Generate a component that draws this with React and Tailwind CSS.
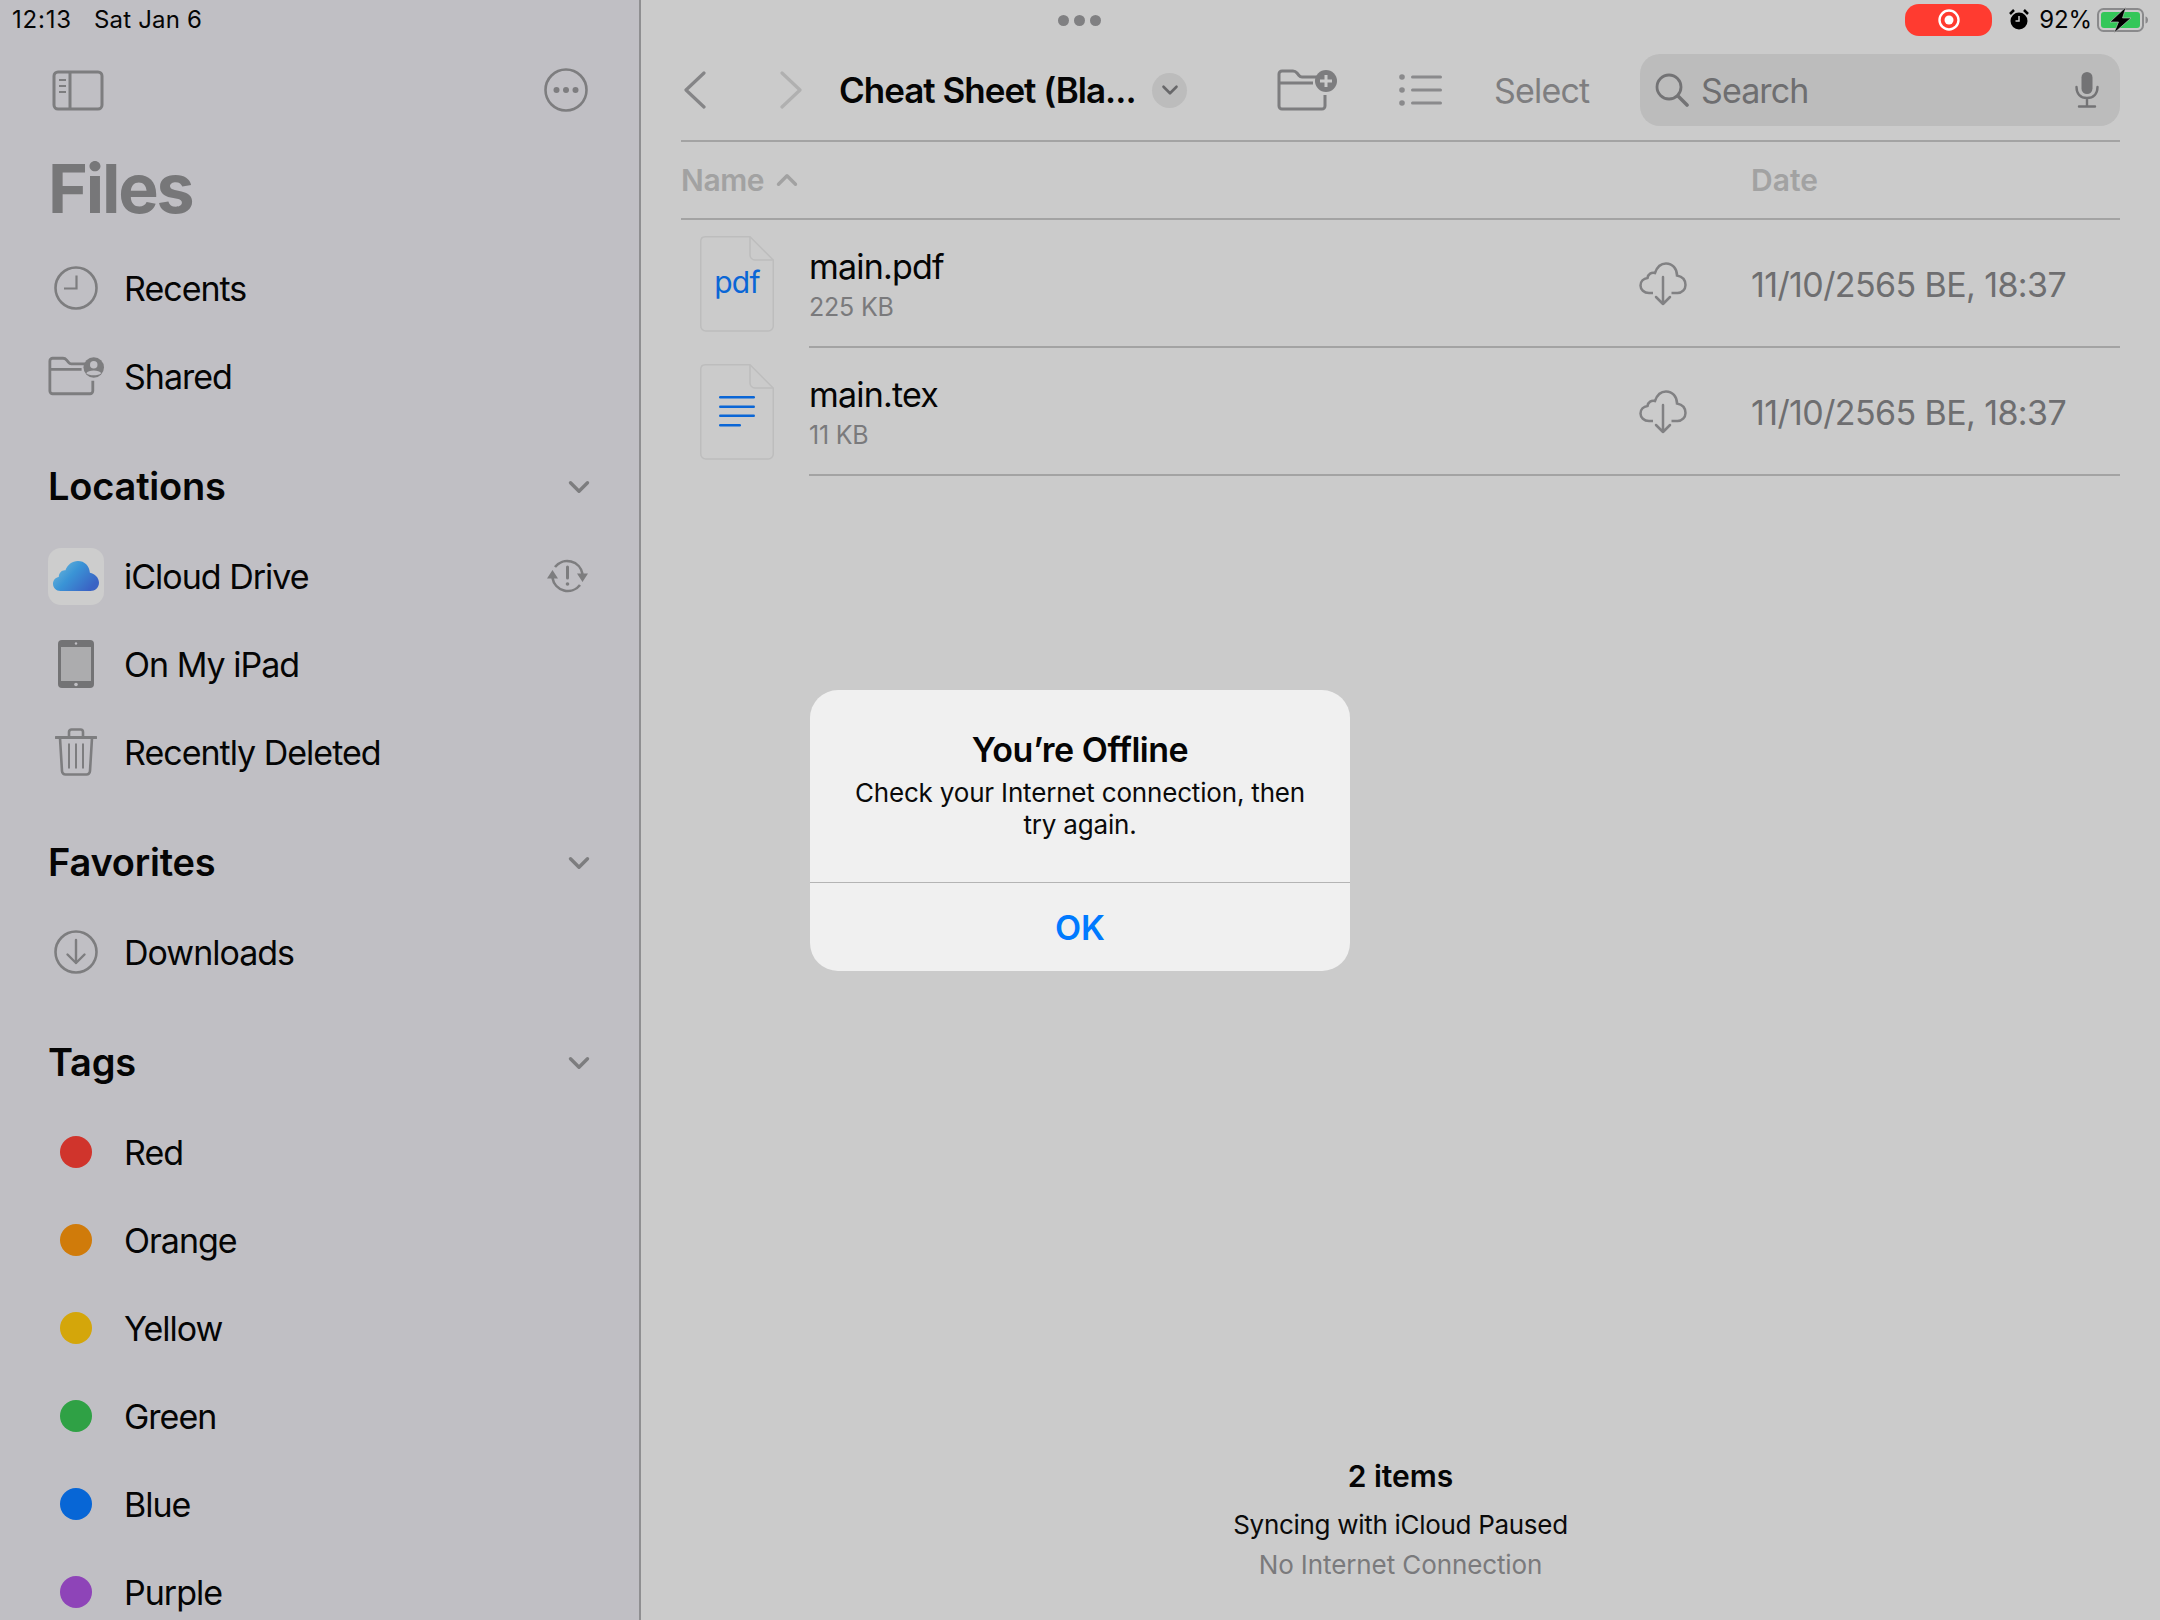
import { ChevronDown, ChevronUp } from 'lucide-react';

const GRAY = '#7d7d7f';

function PanelIcon() {
  return (
    <svg width="52" height="41" viewBox="0 0 52 41" fill="none" stroke={GRAY} strokeWidth="3">
      <rect x="2" y="2" width="48" height="37" rx="4" />
      <path d="M18 2v37" />
      <path d="M7 10h7M7 16h7M7 22h7" strokeWidth="2" />
    </svg>
  );
}

function MoreIcon() {
  return (
    <svg width="44" height="44" viewBox="0 0 44 44" fill="none">
      <circle cx="22" cy="22" r="20.5" stroke={GRAY} strokeWidth="2.6" />
      <circle cx="12.5" cy="22" r="3" fill={GRAY} />
      <circle cx="22" cy="22" r="3" fill={GRAY} />
      <circle cx="31.5" cy="22" r="3" fill={GRAY} />
    </svg>
  );
}

function ClockIcon() {
  return (
    <svg width="44" height="44" viewBox="0 0 44 44" fill="none" stroke={GRAY} strokeWidth="2.6">
      <circle cx="22" cy="22" r="20.5" />
      <path d="M22.5 9.5v13H10" strokeWidth="2.2" />
    </svg>
  );
}

function DownloadIcon() {
  return (
    <svg width="44" height="44" viewBox="0 0 44 44" fill="none" stroke={GRAY} strokeWidth="2.6">
      <circle cx="22" cy="22" r="20.5" />
      <path d="M22 10v23M13.5 24.5 22 33l8.500-8.500" strokeWidth="2.4" strokeLinecap="round" strokeLinejoin="round" />
    </svg>
  );
}

function FolderShape({ children }) {
  return (
    <svg width="60" height="42" viewBox="0 0 60 42" fill="none">
      <path
        d="M2 14V5a3 3 0 0 1 3-3h11c2 0 3 .8 4 2l2 2.500c.8 1 1.500 1.500 3 1.500h15M2 14h34M2 14v23a3 3 0 0 0 3 3h40a3 3 0 0 0 3-3V26"
        stroke={GRAY}
        strokeWidth="3"
      />
      {children}
    </svg>
  );
}

function SharedFolderIcon() {
  return (
    <FolderShape>
      <circle cx="49" cy="12" r="11" fill={GRAY} />
      <circle cx="49" cy="9" r="4" fill="#c0bfc4" />
      <path d="M41 18c2-4 14-4 16 0-3 3-13 3-16 0Z" fill="#c0bfc4" />
    </FolderShape>
  );
}

function NewFolderIcon() {
  return (
    <FolderShape>
      <circle cx="49" cy="12" r="11" fill={GRAY} />
      <path d="M49 6v12M43 12h12" stroke="#cbcbcb" strokeWidth="3" />
    </FolderShape>
  );
}

function CloudLogo() {
  return (
    <svg width="46" height="31" viewBox="0 0 48 32" preserveAspectRatio="none">
      <defs>
        <linearGradient id="icloud" x1="0" y1="0" x2="1" y2="0.6">
          <stop offset="0" stopColor="#78bedb" />
          <stop offset="0.5" stopColor="#3a94d6" />
          <stop offset="1" stopColor="#3a63c4" />
        </linearGradient>
      </defs>
      <path
        d="M8 31C3 31 0 27.500 0 23.500 0 19.500 3 17 6 16.500 6 12 9.500 9 13 9.500 15 4 20 0 26 0c7 0 12 5 12.500 12 5 1 9.500 5 9.500 10.500C48 27.500 44 31 39 31Z"
        fill="url(#icloud)"
      />
    </svg>
  );
}

function SyncAlertIcon() {
  return (
    <svg width="41" height="34" viewBox="0 0 41 34" fill="none" stroke={GRAY}>
      <path d="M35.500 15A15.500 15.500 0 0 0 8 8M5.500 19A15.500 15.500 0 0 0 33 26" strokeWidth="2.600" />
      <path d="M0 19.500h11L5.500 11Z M30 14.500h11L35.500 23Z" fill={GRAY} stroke="none" />
      <path d="M20.500 8v11" strokeWidth="3" strokeLinecap="round" />
      <circle cx="20.500" cy="25" r="1.800" fill={GRAY} stroke="none" />
    </svg>
  );
}

function IpadIcon() {
  return (
    <svg width="36" height="48" viewBox="0 0 36 48">
      <rect x="0" y="0" width="36" height="48" rx="4" fill="#737375" />
      <rect x="3" y="7" width="30" height="34" fill="#acacae" />
      <circle cx="18" cy="3.500" r="1.200" fill="#c0bfc4" />
      <circle cx="18" cy="44.500" r="1.800" fill="#c0bfc4" />
    </svg>
  );
}

function TrashIcon() {
  return (
    <svg width="42" height="48" viewBox="0 0 42 48" fill="none" stroke={GRAY} strokeWidth="2.6">
      <path d="M1 9.500h40" strokeWidth="3" strokeLinecap="round" />
      <path d="M14 9V4a2.500 2.500 0 0 1 2.500-2.500h9A2.500 2.500 0 0 1 28 4v5" />
      <path d="M5 10l2 33a3.500 3.500 0 0 0 3.500 3.500h21A3.500 3.500 0 0 0 35 43l2-33" />
      <path d="M14 15.500v25M21 15.500v25M28 15.500v25" strokeWidth="2" />
    </svg>
  );
}

function ListIcon() {
  return (
    <svg width="44" height="34" viewBox="0 0 44 34" fill="#8a8a8c">
      <circle cx="3" cy="4" r="2.800" />
      <circle cx="3" cy="17" r="2.800" />
      <circle cx="3" cy="30" r="2.800" />
      <rect x="12" y="2.500" width="31" height="3" rx="1.500" />
      <rect x="12" y="15.500" width="31" height="3" rx="1.500" />
      <rect x="12" y="28.500" width="31" height="3" rx="1.500" />
    </svg>
  );
}

function NavChevron({ flip, color }) {
  return (
    <svg width="22" height="38" viewBox="0 0 22 38" fill="none">
      <path
        d={flip ? 'M2 2l18 17L2 36' : 'M20 2 2 19l18 17'}
        stroke={color}
        strokeWidth="3.200"
        strokeLinecap="round"
        strokeLinejoin="round"
      />
    </svg>
  );
}

function SearchIcon() {
  return (
    <svg width="34" height="34" viewBox="0 0 34 34" fill="none" stroke="#737375">
      <circle cx="14" cy="14" r="12" strokeWidth="2.8" />
      <path d="M23 23l9 9" strokeWidth="3.600" strokeLinecap="round" />
    </svg>
  );
}

function MicIcon() {
  return (
    <svg width="24" height="36" viewBox="0 0 24 36" fill="none" stroke="#737375">
      <rect x="6.500" y="0" width="11" height="22" rx="5.500" fill="#737375" stroke="none" />
      <path d="M1.500 15c0 7 4 11 10.500 11s10.500-4 10.500-11M12 26v8M4 34.500h16" strokeWidth="2.400" strokeLinecap="round" />
    </svg>
  );
}

function CloudDownloadIcon() {
  return (
    <svg width="48" height="44" viewBox="0 0 48 44" fill="none" stroke="#818183" strokeWidth="2.500">
      <path
        d="M14 31h-4C5 31 1.500 27.500 1.500 23.500 1.500 19.500 4.500 16.500 8.500 16 9 12 12.500 10 16 11 18 5 22 1.500 27 1.500c6.500 0 11 5 11 12 5 1 8.500 4.500 8.500 9.500 0 4.500-3.500 8-8 8h-6"
      />
      <path d="M24 15v27M17 35l7 7 7-7" strokeLinecap="round" strokeLinejoin="round" />
    </svg>
  );
}

function FileIcon({ children }) {
  return (
    <div className="relative w-[74px] h-[96px] shrink-0">
      <svg className="absolute inset-0" width="74" height="96" viewBox="0 0 74 96" fill="none">
        <path
          d="M5 .75h45L73.250 24v66a5 5 0 0 1-5 5H5.750a5 5 0 0 1-5-5V5A4.500 4.500 0 0 1 5 .75Z"
          stroke="#bdbdbd"
          strokeWidth="1.500"
        />
        <path d="M50 1v18a5 5 0 0 0 5 5h18" stroke="#bdbdbd" strokeWidth="1.500" />
      </svg>
      <div className="absolute inset-0 flex items-center justify-center">{children}</div>
    </div>
  );
}

function FileRow({ name, size, children }) {
  return (
    <div className="flex items-center h-[128px] pl-[19px]">
      <FileIcon>{children}</FileIcon>
      <div className="flex items-center h-full flex-1 ml-[35px] pt-[2px] border-b-2 border-[#a3a3a3]">
        <div className="flex-1">
          <div className="text-[34px] leading-[42px] tracking-[-0.8px] text-[#050505]">{name}</div>
          <div className="text-[25px] leading-[30px] mt-[4px] tracking-[-0.2px] text-[#7a7a7c]">{size}</div>
        </div>
        <CloudDownloadIcon />
        <div className="w-[369px] ml-[64px] shrink-0 text-[34px] tracking-[-0.6px] text-[#6e6e70] whitespace-nowrap">
          11/10/2565 BE, 18:37
        </div>
      </div>
    </div>
  );
}

function SidebarRow({ icon, label, right }) {
  return (
    <div className="flex items-center h-[88px] pl-[48px] pr-[51px]">
      <div className="w-[56px] flex items-center justify-center shrink-0">{icon}</div>
      <div className="ml-[20px] flex-1 text-[34px] tracking-[-1px] text-[#050505]">{label}</div>
      {right}
    </div>
  );
}

function SectionHeader({ title }) {
  return (
    <div className="flex items-center justify-between h-[88px] mt-[22px] mb-[2px] pl-[48px] pr-[43px]">
      <span className="text-[38px] tracking-[-0.2px] font-semibold text-[#050505]">{title}</span>
      <ChevronDown className="mt-[2px]" size={34} color={GRAY} strokeWidth={2.4} />
    </div>
  );
}

function TagDot({ color }) {
  return <div className={`w-[32px] h-[32px] rounded-full ${color}`} />;
}

const tags = [
  { label: 'Red', color: 'bg-[#d0342c]' },
  { label: 'Orange', color: 'bg-[#d07b0a]' },
  { label: 'Yellow', color: 'bg-[#d4a60a]' },
  { label: 'Green', color: 'bg-[#2fa145]' },
  { label: 'Blue', color: 'bg-[#0766d6]' },
  { label: 'Purple', color: 'bg-[#8e44b8]' },
];

function Sidebar() {
  return (
    <aside className="w-[641px] shrink-0 bg-[#c0bfc4] border-r-2 border-[#8f8f91] overflow-hidden">
      <div className="h-[40px] pl-[12px] flex items-center text-[24px] text-[#050505] gap-[22px]">
        <span className="tracking-[0.8px]">12:13</span>
        <span className="tracking-[0.2px]">Sat Jan 6</span>
      </div>
      <div className="h-[100px] flex items-center justify-between pl-[52px] pr-[51px]">
        <PanelIcon />
        <MoreIcon />
      </div>
      <div className="h-[96px] mb-[8px] pl-[48px] flex items-center text-[68px] tracking-[-2.2px] font-bold text-[#777779]">
        Files
      </div>

      <SidebarRow icon={<ClockIcon />} label="Recents" />
      <SidebarRow icon={<SharedFolderIcon />} label="Shared" />

      <SectionHeader title="Locations" />
      <SidebarRow
        icon={
          <div className="w-[56px] h-[57px] rounded-[13px] bg-[#cdcdcd] flex items-center justify-center">
            <CloudLogo />
          </div>
        }
        label="iCloud Drive"
        right={<SyncAlertIcon />}
      />
      <SidebarRow icon={<IpadIcon />} label="On My iPad" />
      <SidebarRow icon={<TrashIcon />} label="Recently Deleted" />

      <SectionHeader title="Favorites" />
      <SidebarRow icon={<DownloadIcon />} label="Downloads" />

      <SectionHeader title="Tags" />
      {tags.map((t) => (
        <SidebarRow key={t.label} icon={<TagDot color={t.color} />} label={t.label} />
      ))}
    </aside>
  );
}

function StatusRight() {
  return (
    <div className="flex items-center h-[40px] pr-[11px]">
      <div className="w-[87px] h-[32px] rounded-[14px] bg-[#ff3b30] flex items-center justify-center">
        <svg width="22" height="22" viewBox="0 0 22 22" fill="none">
          <circle cx="11" cy="11" r="9.500" stroke="#fff" strokeWidth="2.400" />
          <circle cx="11" cy="11" r="4.500" fill="#fff" />
        </svg>
      </div>
      <svg className="ml-[17px]" width="20" height="22" viewBox="0 0 20 22">
        <circle cx="10" cy="12" r="8.500" fill="#000" />
        <path d="M1 5l4-4M19 5l-4-4" stroke="#000" strokeWidth="2.500" />
        <path d="M10 7v5H6.500" stroke="#cbcbcb" strokeWidth="1.500" fill="none" />
      </svg>
      <span className="ml-[10px] text-[24px] tracking-[-0.1px] text-[#050505]">92%</span>
      <svg className="ml-[5px]" width="52" height="26" viewBox="0 0 52 26" fill="none">
        <rect x="1" y="2" width="45" height="22" rx="5.500" stroke="#8a8a8c" strokeWidth="2" />
        <rect x="4" y="5" width="39" height="16" rx="3" fill="#34c759" />
        <path d="M48.500 9.500c2 .5 2.500 2 2.500 3.500s-.5 3-2.500 3.500Z" fill="#8a8a8c" />
        <path d="M29 0 13 15h8.500L17 26l17-15h-8.500L29 0Z" fill="#000" stroke="#cbcbcb" strokeWidth="0.600" />
      </svg>
    </div>
  );
}

function Toolbar() {
  return (
    <div className="flex items-center h-[100px] pl-[43px] pr-[40px]">
      <NavChevron color="#858587" />
      <div className="ml-[74px]">
        <NavChevron flip color="#b0b0b0" />
      </div>
      <span className="ml-[37px] w-[297px] shrink-0 text-[35px] tracking-[-1px] font-semibold text-[#050505] whitespace-nowrap">
        Cheat Sheet (Bla...
      </span>
      <div className="ml-[16px] w-[35px] h-[35px] shrink-0 rounded-full bg-[#bcbcbc] flex items-center justify-center">
        <ChevronDown size={26} color="#68686a" strokeWidth={2.4} />
      </div>
      <div className="ml-[90px]">
        <NewFolderIcon />
      </div>
      <div className="ml-[62px]">
        <ListIcon />
      </div>
      <span className="ml-[51px] w-[96px] shrink-0 text-[34px] tracking-[-0.8px] text-[#7e7e80]">Select</span>
      <div className="ml-[50px] flex-1 h-[72px] rounded-[20px] bg-[#bcbcbc] flex items-center pl-[15px] pr-[21px]">
        <SearchIcon />
        <span className="ml-[12px] flex-1 text-[34px] tracking-[-0.9px] text-[#6e6e70]">Search</span>
        <MicIcon />
      </div>
    </div>
  );
}

function Dialog() {
  return (
    <div className="absolute left-[810px] top-[690px] w-[540px] h-[281px] rounded-[28px] bg-[#f0f0f0] flex flex-col text-center">
      <div className="h-[193px] border-b border-[#b4b4b4] px-[40px] pt-[39px]">
        <div className="text-[34px] leading-[42px] tracking-[-0.5px] font-semibold text-[#050505]">You’re Offline</div>
        <div className="mt-[6px] text-[26px] leading-[32px] tracking-[-0.18px] text-[#0a0a0a]">
          Check your Internet connection, then try again.
        </div>
      </div>
      <div className="flex-1 flex items-center justify-center text-[34px] font-semibold text-[#007aff]">OK</div>
    </div>
  );
}

export default function App() {
  return (
    <div
      className="relative w-[2160px] h-[1620px] flex overflow-hidden bg-[#cbcbcb]"
      style={{ fontFamily: 'Inter, "Liberation Sans", sans-serif' }}
    >
      <Sidebar />
      <main className="flex-1 flex flex-col">
        <div className="flex items-center justify-between h-[40px] pl-[417px]">
          <div className="flex gap-[5px]">
            <div className="w-[11px] h-[11px] rounded-full bg-[#808082]" />
            <div className="w-[11px] h-[11px] rounded-full bg-[#808082]" />
            <div className="w-[11px] h-[11px] rounded-full bg-[#808082]" />
          </div>
          <StatusRight />
        </div>
        <Toolbar />
        <div className="mx-[40px] h-[80px] border-t-2 border-b-2 border-[#a3a3a3] flex items-center">
          <span className="text-[30px] tracking-[-0.4px] font-semibold text-[#a2a2a2]">Name</span>
          <ChevronUp className="ml-[6px]" size={34} color="#a2a2a2" strokeWidth={2.4} />
          <span className="ml-auto w-[369px] text-[30px] font-semibold text-[#a2a2a2]">Date</span>
        </div>
        <div className="ml-[40px] mr-[40px]">
          <FileRow name="main.pdf" size="225 KB">
            <span className="text-[30px] mt-[-4px] tracking-[-0.8px] text-[#0a66d6]">pdf</span>
          </FileRow>
          <FileRow name="main.tex" size="11 KB">
            <svg width="36" height="32" viewBox="0 0 36 32" fill="#0a66d6">
              <rect width="36" height="2.600" rx="1.300" />
              <rect y="9.500" width="36" height="2.600" rx="1.300" />
              <rect y="18.500" width="36" height="2.600" rx="1.300" />
              <rect y="28" width="22" height="2.600" rx="1.300" />
            </svg>
          </FileRow>
        </div>
        <div className="mt-auto pb-[35px] text-center">
          <div className="text-[30px] leading-[40px] font-semibold text-[#050505]">2 items</div>
          <div className="mt-[9px] text-[26px] leading-[40px] tracking-[-0.3px] text-[#0a0a0a]">
            Syncing with iCloud Paused
          </div>
          <div className="text-[26px] leading-[40px] tracking-[-0.1px] text-[#7a7a7c]">No Internet Connection</div>
        </div>
      </main>
      <Dialog />
    </div>
  );
}
